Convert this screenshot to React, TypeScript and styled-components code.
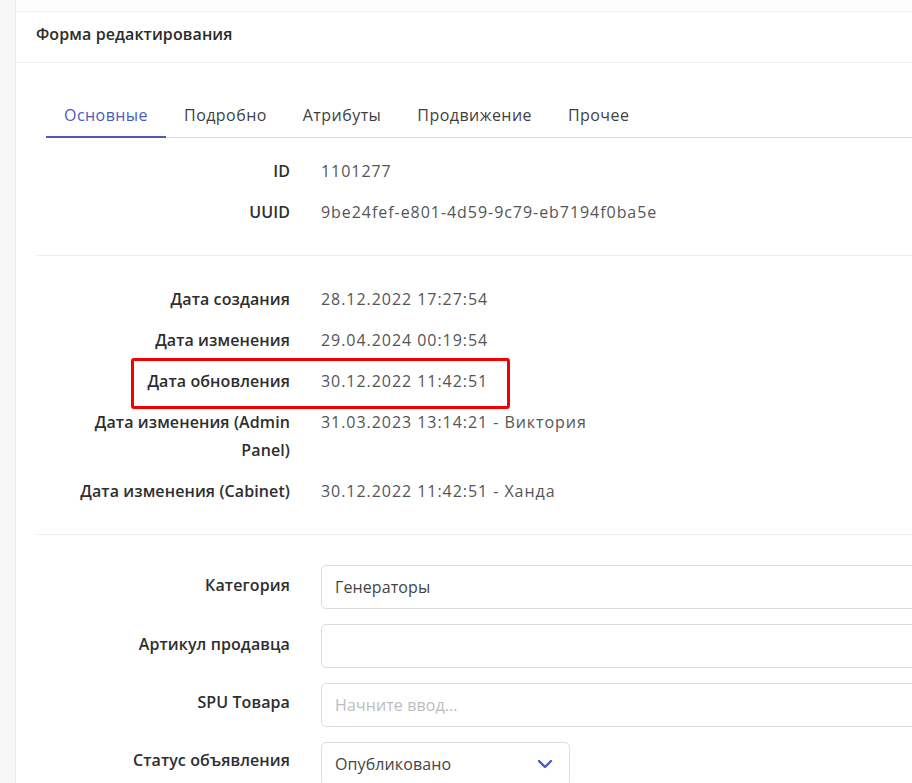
import React from "react";
import styled, { createGlobalStyle } from "styled-components";

const Global = createGlobalStyle`
  html, body { margin: 0; padding: 0; background: #f6f6f6; overflow: hidden; }
  body { font-family: "Open Sans", "Noto Sans", sans-serif; }
  * { box-sizing: border-box; }
`;

const Page = styled.div`
  display: flex;
  width: 1200px;
  min-height: 783px;
`;

const Strip = styled.div`
  width: 16px;
  flex: none;
  background: #f6f6f6;
  border-right: 1px solid #ebebeb;
`;

const Main = styled.div`
  flex: 1;
  background: #fdfdfd;
  padding-top: 11px;
`;

const Card = styled.div`
  background: #fff;
  border-top: 1px solid #efefef;
`;

const CardHeader = styled.div`
  height: 51px;
  padding: 11px 20px 0;
  border-bottom: 1px solid #ededed;
  font-size: 16px;
  line-height: 22px;
  font-weight: 600;
  letter-spacing: 0.1px;
  color: #2b2b2b;
`;

const CardBody = styled.div`
  padding: 30px 20px 0;
`;

const Tabs = styled.div`
  display: flex;
  margin-left: 10px;
  border-bottom: 1px solid #dcdcdc;
`;

const Tab = styled.div<{ $active?: boolean }>`
  padding: 11px 18px 10px;
  font-size: 16px;
  line-height: 22px;
  letter-spacing: 0.45px;
  color: ${(p) => (p.$active ? "#4a5bbd" : "#3f3f3f")};
  margin-bottom: -1px;
  border-bottom: 2px solid ${(p) => (p.$active ? "#4a5bbd" : "transparent")};
`;

const Section = styled.div<{ $first?: boolean; $last?: boolean }>`
  display: grid;
  grid-template-columns: 254px 1fr;
  column-gap: 31px;
  row-gap: 13px;
  padding: ${(p) => (p.$first ? "19px" : "29px")} 0 ${(p) => (p.$last ? "0" : "29px")};
  border-bottom: ${(p) => (p.$last ? "none" : "1px solid #eeeeee")};
`;

const FormSection = styled(Section)`
  row-gap: 15px;
  padding-top: 30px;
`;

const Label = styled.div<{ $pad?: number }>`
  text-align: right;
  font-size: 16px;
  line-height: 28px;
  font-weight: 600;
  letter-spacing: 0.1px;
  color: #2e2e2e;
  padding-left: 30px;
  padding-top: ${(p) => p.$pad ?? 0}px;
`;

const Value = styled.div`
  font-size: 16px;
  line-height: 28px;
  letter-spacing: 0.95px;
  color: #555;
`;

const Highlight = styled.div`
  grid-column: 1 / 3;
  display: grid;
  grid-template-columns: 254px auto;
  column-gap: 31px;
  justify-content: start;
  position: relative;
  &::after {
    content: "";
    position: absolute;
    left: 95px;
    top: -9px;
    width: 373px;
    height: 45px;
    border: 3px solid #f20000;
    border-radius: 3px;
    pointer-events: none;
  }
`;

const Input = styled.div<{ $placeholder?: boolean }>`
  height: 44px;
  border: 1px solid #dcdcdc;
  border-radius: 5px;
  padding: 0 13px;
  display: flex;
  align-items: center;
  font-size: 16px;
  letter-spacing: 0.1px;
  color: ${(p) => (p.$placeholder ? "#bdbdbd" : "#444")};
`;

const Select = styled(Input)`
  width: 249px;
  justify-content: space-between;
  padding-right: 16px;
`;

const Chevron = () => (
  <svg width="16" height="10" viewBox="0 0 16 10" fill="none">
    <path d="M2 2 L8 8 L14 2" stroke="#4a5bbd" strokeWidth="2.4" strokeLinecap="round" strokeLinejoin="round" />
  </svg>
);

export default function App() {
  return (
    <>
      <Global />
      <Page>
        <Strip />
        <Main>
          <Card>
            <CardHeader>Форма редактирования</CardHeader>
            <CardBody>
              <Tabs>
                <Tab $active>Основные</Tab>
                <Tab>Подробно</Tab>
                <Tab>Атрибуты</Tab>
                <Tab>Продвижение</Tab>
                <Tab>Прочее</Tab>
              </Tabs>
              <Section $first>
                <Label>ID</Label>
                <Value>1101277</Value>
                <Label>UUID</Label>
                <Value>9be24fef-e801-4d59-9c79-eb7194f0ba5e</Value>
              </Section>
              <Section>
                <Label>Дата создания</Label>
                <Value>28.12.2022 17:27:54</Value>
                <Label>Дата изменения</Label>
                <Value>29.04.2024 00:19:54</Value>
                <Highlight>
                  <Label>Дата обновления</Label>
                  <Value>30.12.2022 11:42:51</Value>
                </Highlight>
                <Label>Дата изменения (Admin Panel)</Label>
                <Value>31.03.2023 13:14:21 - Виктория</Value>
                <Label>Дата изменения (Cabinet)</Label>
                <Value>30.12.2022 11:42:51 - Ханда</Value>
              </Section>
              <FormSection $last>
                <Label $pad={6}>Категория</Label>
                <Input>Генераторы</Input>
                <Label $pad={6}>Артикул продавца</Label>
                <Input />
                <Label $pad={5}>SPU Товара</Label>
                <Input $placeholder>Начните ввод...</Input>
                <Label $pad={4}>Статус объявления</Label>
                <Select>
                  Опубликовано
                  <Chevron />
                </Select>
              </FormSection>
            </CardBody>
          </Card>
        </Main>
      </Page>
    </>
  );
}
